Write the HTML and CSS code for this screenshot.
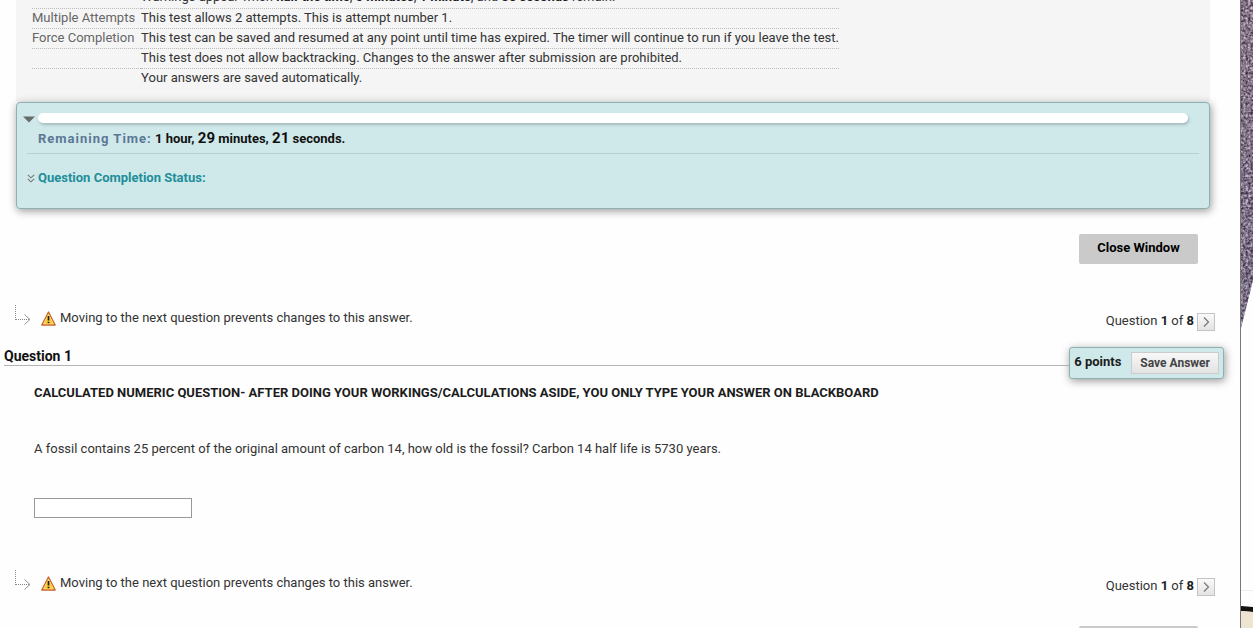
FILE: index.html
```html
<!DOCTYPE html>
<html lang="en">
<head>
<meta charset="utf-8">
<title>Take Test</title>
<link rel="stylesheet" href="styles.css">
</head>
<body>
<svg class="defs" aria-hidden="true">
  <symbol id="branch" viewBox="0 0 16 20">
    <path d="M.5 0V15M1 14.500H14" fill="none" stroke="#888" stroke-dasharray="1 1"/>
    <path d="M9.500 9.500L15 14.500L9.500 19.500" fill="none" stroke="#888" stroke-width=".9"/>
  </symbol>
  <symbol id="warning" viewBox="0 0 15 15">
    <path d="M7.500 1L14.200 14H.8Z" fill="#ffc93c" stroke="#c9622a" stroke-width="1.300" stroke-linejoin="round"/>
    <path d="M7.500 3.200L12.300 12.800H2.700Z" fill="none" stroke="#ffe48a" stroke-width=".7"/>
    <path d="M7.500 5V9.500M7.500 10.700V12.300" stroke="#221c13" stroke-width="1.700"/>
  </symbol>
  <symbol id="next" viewBox="0 0 16 16">
    <path d="M6 3.500L10.500 8L6 12.500" fill="none" stroke="#777" stroke-width="1.200"/>
  </symbol>
</svg>
<div class="page">
  <main class="content">
    <section class="instructions">
      <table class="facts">
        <tr><th></th><td>Warnings appear when <b>half the time</b>, <b>5 minutes</b>, <b>1 minute</b>, and <b>30 seconds</b> remain.</td></tr>
        <tr><th>Multiple Attempts</th><td>This test allows 2 attempts. This is attempt number 1.</td></tr>
        <tr><th>Force Completion</th><td>This test can be saved and resumed at any point until time has expired. The timer will continue to run if you leave the test.</td></tr>
        <tr><th></th><td>This test does not allow backtracking. Changes to the answer after submission are prohibited.</td></tr>
        <tr><th></th><td>Your answers are saved automatically.</td></tr>
      </table>
    </section>

    <section class="status">
      <div class="timer">
        <button class="toggle" aria-label="Collapse timer"><svg width="12" height="7" viewBox="0 0 12 7"><path d="M0 .5H12L6 6.500Z" fill="#666b6b"/></svg></button>
        <div class="bar"></div>
        <p class="remaining"><span class="label">Remaining Time:</span> 1 hour, <span class="big">29</span> minutes, <span class="big">21</span> seconds.</p>
      </div>
      <a class="completion" href="#"><svg width="8" height="9" viewBox="0 0 8 9"><path d="M.8 .8L4 3.800L7.200 .8M.8 4.800L4 7.800L7.200 4.800" fill="none" stroke="#777" stroke-width="1.100"/></svg>Question Completion Status:</a>
    </section>

    <div class="actions"><button class="close">Close Window</button></div>

    <div class="nav">
      <svg class="branch" width="16" height="20"><use href="#branch"/></svg>
      <svg class="warning" width="15" height="15"><use href="#warning"/></svg>
      <span class="note">Moving to the next question prevents changes to this answer.</span>
      <span class="count">Question <b>1</b> of <b>8</b></span>
      <button class="next" aria-label="Next question"><svg width="16" height="16"><use href="#next"/></svg></button>
    </div>

    <section class="question">
      <header class="heading">
        <h2>Question 1</h2>
        <div class="points"><b>6 points</b><button class="save">Save Answer</button></div>
      </header>
      <div class="prompt">
        <p class="lead">CALCULATED NUMERIC QUESTION- AFTER DOING YOUR WORKINGS/CALCULATIONS ASIDE, YOU ONLY TYPE YOUR ANSWER ON BLACKBOARD</p>
        <p class="text">A fossil contains 25 percent of the original amount of carbon 14, how old is the fossil? Carbon 14 half life is 5730 years.</p>
        <input class="answer" type="text" aria-label="Answer">
      </div>
    </section>

    <div class="nav">
      <svg class="branch" width="16" height="20"><use href="#branch"/></svg>
      <svg class="warning" width="15" height="15"><use href="#warning"/></svg>
      <span class="note">Moving to the next question prevents changes to this answer.</span>
      <span class="count">Question <b>1</b> of <b>8</b></span>
      <button class="next" aria-label="Next question"><svg width="16" height="16"><use href="#next"/></svg></button>
    </div>

    <div class="actions last"><button class="close" aria-label="Close Window"></button></div>
  </main>
  <aside class="backdrop">
    <svg width="12" height="628" viewBox="0 0 12 628" aria-hidden="true">
      <defs>
        <linearGradient id="stone" x1="0" y1="0" x2="0" y2="1"><stop offset="0" stop-color="#85747f"/><stop offset="1" stop-color="#696784"/></linearGradient>
        <filter id="grain" x="0" y="0" width="100%" height="100%" color-interpolation-filters="sRGB">
          <feTurbulence type="fractalNoise" baseFrequency=".4" numOctaves="2" seed="4"/>
          <feColorMatrix values="1.600 0 0 0 -.28  1.600 0 0 0 -.34  1.600 0 0 0 -.26  0 0 0 0 .6" result="n"/>
          <feComposite in="n" in2="SourceGraphic" operator="in" result="c"/>
          <feMerge><feMergeNode in="SourceGraphic"/><feMergeNode in="c"/></feMerge>
        </filter>
      </defs>
      <path d="M0 0H12V280L0 328Z" fill="url(#stone)" filter="url(#grain)"/>
      <path d="M0 590.500H12" stroke="#eeeeea"/>
      <path d="M0 606L12 607V612L0 611Z" fill="#15110c"/>
      <path d="M0 611L12 612V628H0Z" fill="#eee4d2"/>
    </svg>
  </aside>
</div>
</body>
</html>
```
FILE: styles.css
```css
* { box-sizing: border-box; }
body {
  margin: 0;
  height: 100vh;
  overflow: hidden;
  background: #fefefe;
  color: #333;
  font: 13px/20px Roboto, "Liberation Sans", sans-serif;
}
button, input { font: inherit; margin: 0; padding: 0; }
p, h2 { margin: 0; }
svg { display: block; flex: none; }
b { color: #1c1c1c; }
.defs { position: absolute; width: 0; height: 0; }
.page { display: flex; height: 100vh; overflow: hidden; }
.content { flex: 1; min-width: 0; }
.backdrop { border-left: 1px solid #777; }

.instructions {
  margin: 0 30px 0 16px;
  padding: 0 16px 14px;
  overflow: hidden;
  background: #f5f5f5;
}
.facts { margin-top: -12px; border-collapse: collapse; }
.facts th, .facts td {
  height: 20px;
  padding: 0;
  line-height: 18px;
  vertical-align: top;
  text-align: left;
  white-space: nowrap;
  border-bottom: 1px dotted #bbb;
}
.facts th { padding-right: 6px; color: #666; font-weight: 400; }
.facts tr:last-child > * { border-bottom: 0; }

.status {
  margin: 0 30px 0 16px;
  padding: 10px 10px 20px;
  background: #cfe9ea;
  border: 1px solid #8fb0b1;
  border-radius: 4px;
  box-shadow: 1px 2px 8px #999;
}
.timer {
  display: grid;
  grid-template-columns: 11px 1fr;
  padding: 0 11px 4px 0;
  border-bottom: 1px solid #bccfd0;
}
.toggle { padding: 3px 0; margin-left: -4px; border: 0; background: none; height: 10px; }
.bar { height: 10px; border-radius: 5px; background: #fff; box-shadow: 1px 2px 3px #a5bcbd; }
.remaining { grid-column: 2; margin-top: 5px; color: #111; font-weight: 700; }
.remaining .label { color: #5b7796; letter-spacing: 1px; }
.remaining .big { font-size: 15px; }
.completion {
  display: flex;
  align-items: center;
  gap: 3px;
  margin-top: 14px;
  color: #218e9a;
  font-weight: 700;
  text-decoration: none;
}

.actions { display: flex; justify-content: flex-end; margin: 25px 42px 0 0; }
.close {
  width: 119px;
  height: 30px;
  padding-bottom: 3px;
  border: 0;
  border-radius: 2px;
  background: #cacaca;
  color: #000;
  font-weight: 700;
}
.nav { display: flex; align-items: flex-start; margin: 41px 25px 0 15px; height: 26px; }
.nav .warning { margin: 6px 4px 0 10px; }
.nav .note { margin-top: 3px; }
.nav .count { margin: 6px 3px 0 auto; }
.next {
  width: 18px;
  height: 18px;
  margin-top: 8px;
  border: 1px solid #c4c4c4;
  background: linear-gradient(#fafafa, #e3e3e3);
}

.heading { display: flex; align-items: flex-start; margin: 16px 16px 0 4px; }
.heading h2 {
  flex: 1;
  height: 19px;
  border-bottom: 1px solid #b5b5b5;
  color: #111;
  font-size: 14px;
  line-height: 18px;
}
.points {
  display: flex;
  align-items: center;
  gap: 10px;
  height: 32px;
  padding: 0 4px;
  background: #cfe9ea;
  border: 1px solid #8fb0b1;
  border-radius: 3px;
  box-shadow: 1px 2px 8px #999;
}
.points b { padding-bottom: 2px; }
.save {
  height: 22px;
  padding: 0 8px;
  border: 1px solid #ccc;
  background: linear-gradient(#f8f8f8, #e2e2e2);
  color: #444;
  font-size: 12px;
  font-weight: 700;
}
.prompt { padding: 4px 34px 0; }
.lead { color: #1c1c1c; font-weight: 700; }
.text { margin-top: 36px; }
.answer {
  display: block;
  width: 158px;
  height: 20px;
  margin-top: 39px;
  border: 1px solid #999;
  background: #fff;
}
.question + .nav { margin-top: 52px; }
.actions.last { margin-top: 30px; }
```
